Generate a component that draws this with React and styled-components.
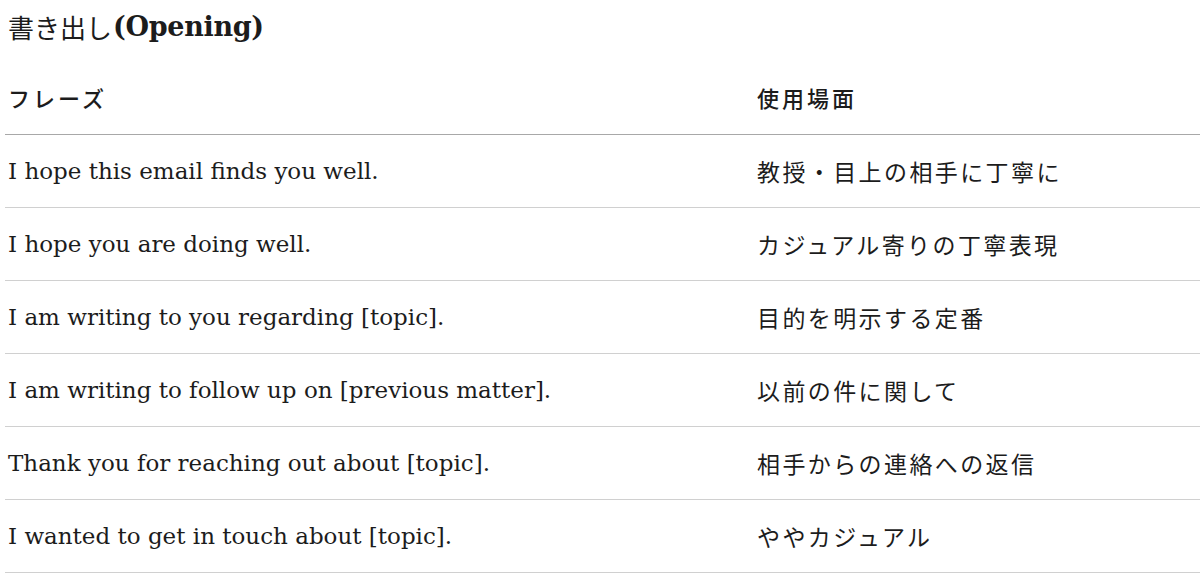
import React from "react";
import styled, { createGlobalStyle } from "styled-components";

const Global = createGlobalStyle`
  html, body { margin: 0; padding: 0; background: #fff; }
  body { font-family: "DejaVu Serif", "Noto Sans CJK JP", serif; color: #1c1c1c; }
`;

const Page = styled.div`
  padding: 0 0 0 5px;
  width: 1195px;
`;

const Title = styled.h2`
  margin: 0;
  height: 63px;
  display: flex;
  align-items: center;
  padding-left: 3px;
  padding-bottom: 10px;
  box-sizing: border-box;
  font-family: "DejaVu Serif", "Noto Sans CJK JP", serif;
  font-size: 27px;
  font-weight: 700;
  letter-spacing: -0.3px;
  color: #1c1c1c;
`;

const Jp = styled.span`
  font-family: "Noto Sans CJK JP", sans-serif;
  font-weight: 400;
  font-size: 26px;
  letter-spacing: 0;
  margin-right: 1px;
`;

const Table = styled.table`
  width: 100%;
  border-collapse: collapse;
`;

const Th = styled.th`
  text-align: left;
  height: 68px;
  padding: 0 0 3px 3px;
  font-family: "Noto Sans CJK JP", sans-serif;
  font-weight: 500;
  font-size: 22px;
  letter-spacing: 3px;
  color: #1c1c1c;
  border-bottom: 1.5px solid #a8a8a8;
  width: ${(p) => p.$w || "auto"};
`;

const Td = styled.td`
  height: 72px;
  padding: 0 0 0 3px;
  border-bottom: 1px solid #d0d0d0;
  font-family: ${(p) =>
    p.$jp ? '"Noto Sans CJK JP", sans-serif' : '"DejaVu Serif", serif'};
  font-size: 23px;
  letter-spacing: ${(p) => (p.$jp ? "2.4px" : "0")};
  color: #1c1c1c;
`;

const rows = [
  ["I hope this email finds you well.", "教授・目上の相手に丁寧に"],
  ["I hope you are doing well.", "カジュアル寄りの丁寧表現"],
  ["I am writing to you regarding [topic].", "目的を明示する定番"],
  ["I am writing to follow up on [previous matter].", "以前の件に関して"],
  ["Thank you for reaching out about [topic].", "相手からの連絡への返信"],
  ["I wanted to get in touch about [topic].", "ややカジュアル"],
];

export default function App() {
  return (
    <>
      <Global />
      <Page>
        <Title>
          <Jp>書き出し</Jp>(Opening)
        </Title>
        <Table>
          <thead>
            <tr>
              <Th $w="746px">フレーズ</Th>
              <Th>使用場面</Th>
            </tr>
          </thead>
          <tbody>
            {rows.map(([a, b]) => (
              <tr key={a}>
                <Td>{a}</Td>
                <Td $jp>{b}</Td>
              </tr>
            ))}
          </tbody>
        </Table>
      </Page>
    </>
  );
}
